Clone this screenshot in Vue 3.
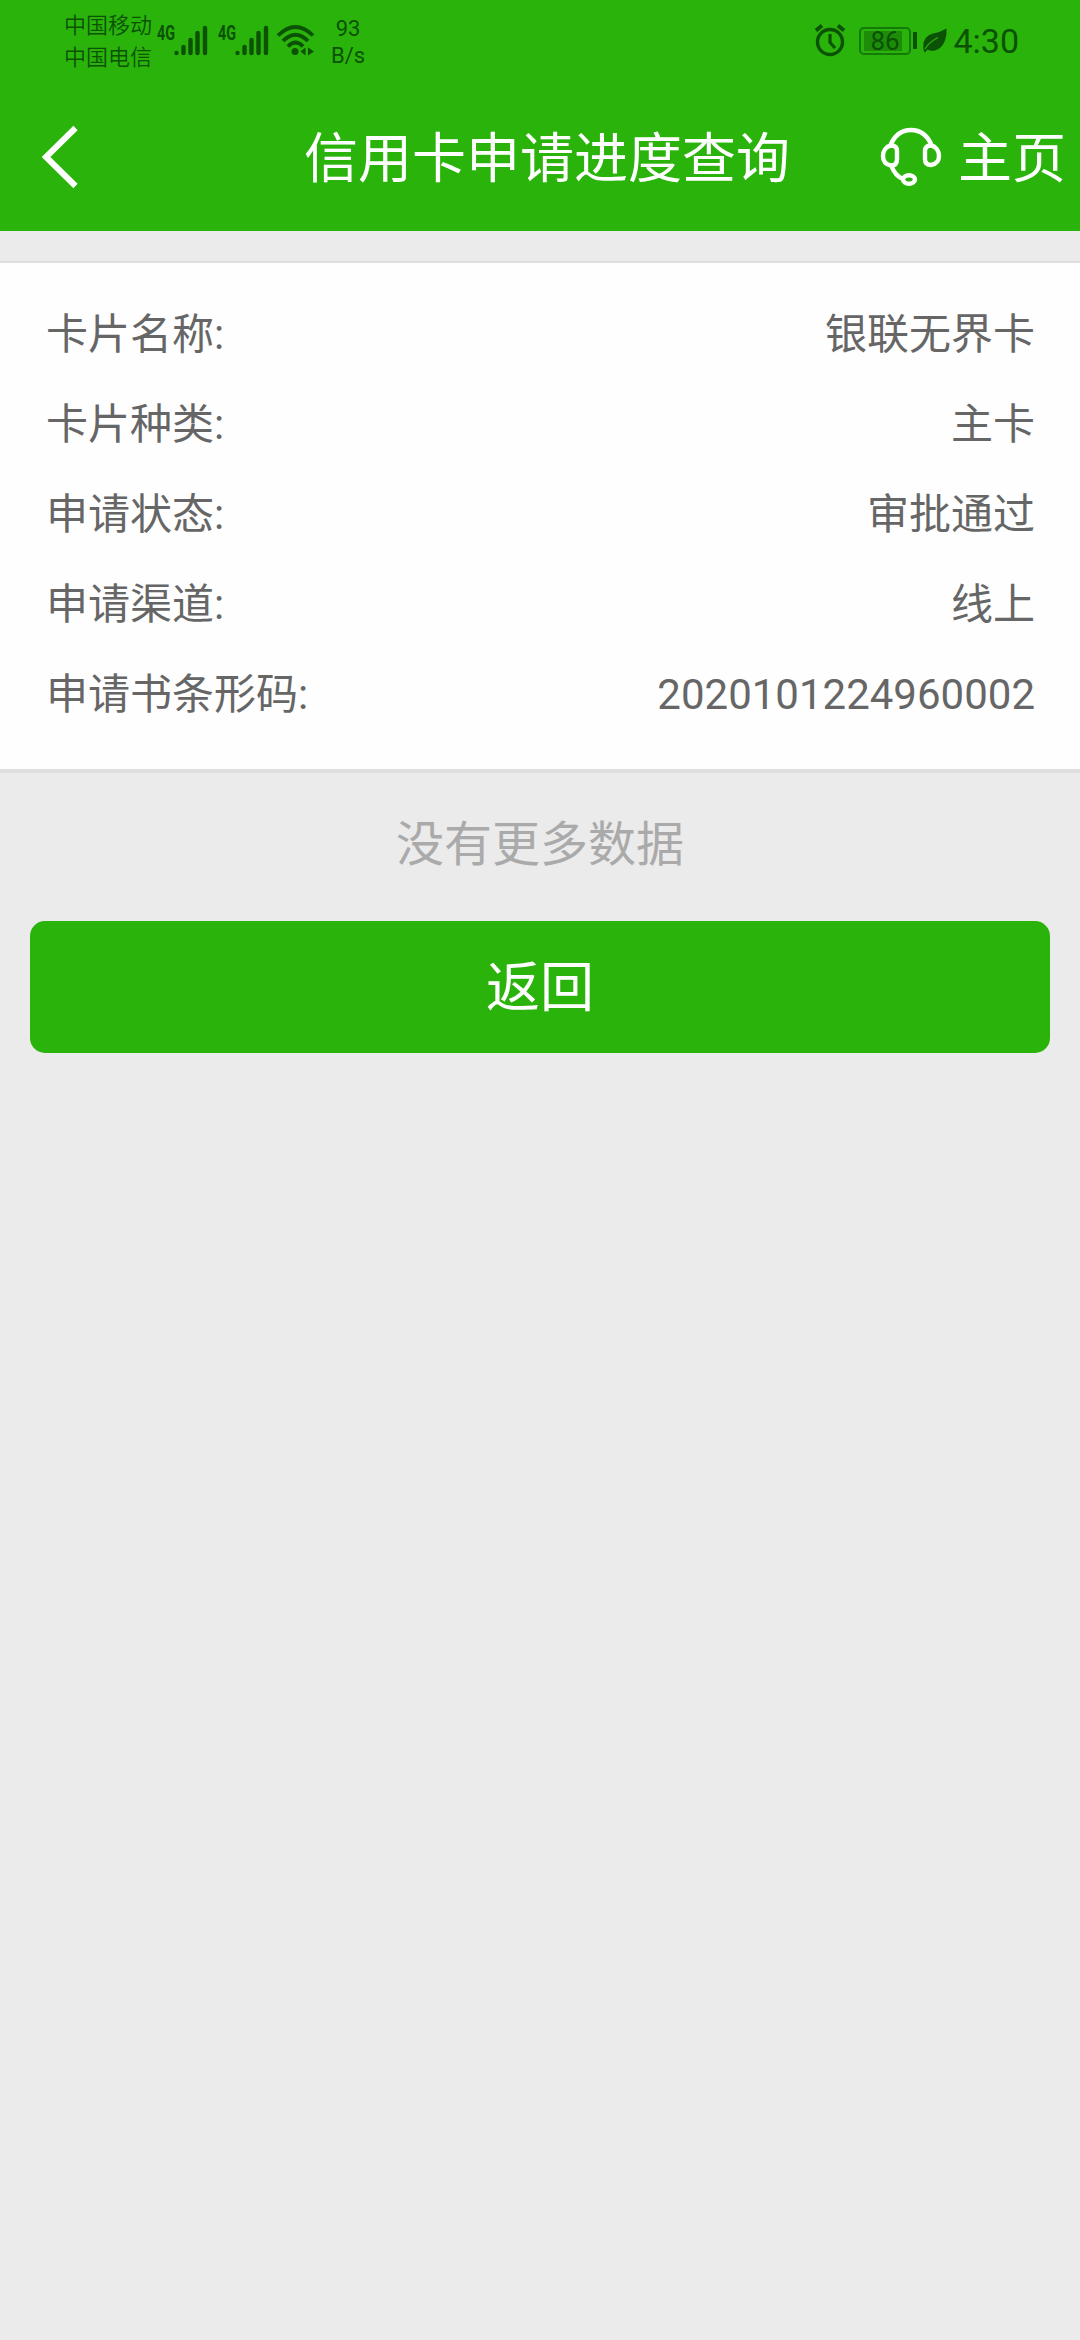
<script setup>
const rows = [
  { label: '卡片名称:', value: '银联无界卡' },
  { label: '卡片种类:', value: '主卡' },
  { label: '申请状态:', value: '审批通过' },
  { label: '申请渠道:', value: '线上' },
  { label: '申请书条形码:', value: '2020101224960002' }
]
const signals = [1, 2]
</script>

<template>
  <div class="page">
    <header class="header">
      <div class="status">
        <div class="carriers">
          <span>中国移动</span>
          <span>中国电信</span>
        </div>
        <svg v-for="s in signals" :key="s" class="signal" width="56" height="50" viewBox="-2 -8 56 50">
          <text x="0" y="17" textLength="18" lengthAdjust="spacingAndGlyphs" class="net">4G</text>
          <g stroke="currentColor" stroke-width="4.400" stroke-linecap="round">
            <path d="M19.500 30v.1M26.500 30v-6M33.500 30V17M40.500 30V10M48 30V5" />
          </g>
        </svg>
        <svg class="wifi" width="40" height="34" viewBox="0 0 40 34">
          <g fill="none" stroke="currentColor" stroke-width="3.800">
            <path d="M2 12.500Q19.500 -4.500 37 12.500" />
            <path d="M7 18Q19.500 5.500 32 18" />
            <path d="M12 23.500Q19.500 15.500 27 23.500" />
          </g>
          <circle cx="19" cy="28.500" r="3.500" fill="currentColor" />
          <path d="M29.500 24.500v8l-5-4zM32 24.500v8l6-4z" fill="currentColor" />
        </svg>
        <div class="speed">
          <span>93</span>
          <span>B/s</span>
        </div>
        <div class="status-right">
          <svg width="32" height="34" viewBox="0 0 32 34">
            <g fill="none" stroke="currentColor">
              <circle cx="16" cy="19" r="12.500" stroke-width="3.400" />
              <path d="M16 11v8.500l5 5.500" stroke-width="3.200" />
              <path d="M2 7.500l6-5M30 7.500l-6-5" stroke-width="3.800" />
            </g>
          </svg>
          <div class="battery"><span class="charge">86</span></div>
          <i class="nub"></i>
          <svg class="leaf" width="24" height="25" viewBox="0 0 24 25">
            <path d="M23.500 .5C24 10 21 20 12 22.500Q8 23.500 4.500 21.500L2 24.500 .8 23Q-2 9 10 5.500 18 4 23.500 .5z" fill="currentColor" />
            <path d="M2 21Q6 14 15 9.500" fill="none" stroke="#2ab30a" stroke-width="1.200" />
          </svg>
          <span class="clock">4:30</span>
        </div>
      </div>
      <nav class="nav">
        <svg class="back" width="40" height="66" viewBox="0 0 40 66">
          <path d="M35.500 4L6 33l29.500 29" fill="none" stroke="#fff" stroke-width="6" />
        </svg>
        <h1>信用卡申请进度查询</h1>
        <svg class="headset" width="62" height="60" viewBox="0 0 62 60">
          <g fill="none" stroke="#fff" stroke-width="4.400">
            <path d="M10 19C15 7 22 3 31 3S47 7 52 19" />
            <path d="M11 18.500C15.500 18.500 17 20.500 17 24v8c0 4-2 6.500-6 6.500C5.500 37.500 3 34 3 29s3-9.500 8-10.500z" />
            <path d="M51 18.500C46.500 18.500 45 20.500 45 24v8c0 4 2 6 6 6 5.500-1 8-4 8-9s-3-9.500-8-10.500z" />
            <path d="M11 38Q15 49 23 52" />
            <ellipse cx="29" cy="52.500" rx="6" ry="4.200" />
          </g>
        </svg>
        <span class="home">主页</span>
      </nav>
    </header>
    <main>
      <section class="card">
        <div v-for="row in rows" :key="row.label" class="row">
          <span>{{ row.label }}</span>
          <span>{{ row.value }}</span>
        </div>
      </section>
      <p class="empty">没有更多数据</p>
      <button class="return" type="button">返回</button>
    </main>
  </div>
</template>

<style>
body { background: #ebebeb; }
</style>

<style scoped>
.page {
  width: 1080px;
  height: 2340px;
  overflow: hidden;
  background: #ebebeb;
  font-family: Roboto, "Noto Sans CJK SC", sans-serif;
}
.header { height: 231px; background: #2ab30a; }
.status {
  display: flex;
  align-items: center;
  box-sizing: border-box;
  height: 80px;
  padding: 0 61px 0 64px;
  color: #0b5205;
}
.status svg { display: block; flex: none; }
.carriers, .speed { display: flex; flex-direction: column; font-size: 22px; }
.carriers { width: 91px; line-height: 32px; font-weight: 350; margin-top: 4px; }
.carriers span { white-space: nowrap; }
.signal { margin-right: 5px; }
.net { font: bold 20px Roboto, sans-serif; fill: currentColor; }
.wifi { margin-left: -1px; }
.speed { width: 50px; margin: 3px 0 0 7px; align-items: center; line-height: 27px; }
.status-right { display: flex; align-items: center; margin-left: auto; }
.battery {
  box-sizing: border-box;
  width: 52px;
  height: 28px;
  margin: 1px 0 0 13px;
  padding: 2px 3px;
  border: 2px solid #147a08;
  border-radius: 5px;
}
.charge {
  display: block;
  width: 38px;
  height: 20px;
  padding-left: 6px;
  box-sizing: border-box;
  background: #1c8c09;
  font-size: 26px;
  line-height: 20px;
}
.nub { width: 4px; height: 17px; margin-left: 2px; background: #0b5205; }
.leaf { margin-left: 6px; }
.clock { margin: 2px 0 0 6px; font-size: 34px; line-height: 40px; }
.nav {
  display: flex;
  align-items: center;
  height: 154px;
  color: #fff;
  font-size: 54px;
  line-height: 80px;
}
.nav svg { display: block; flex: none; }
.back { margin-left: 40px; }
.nav h1 { width: 486px; margin: 6px 0 0 224px; font-size: 54px; font-weight: 400; white-space: nowrap; }
.headset { margin-left: 90px; }
.home { margin: 6px 0 0 16px; white-space: nowrap; }
.card {
  margin-top: 30px;
  padding: 27px 45px 29px 46px;
  border-top: 2px solid #dedede;
  border-bottom: 4px solid #dedede;
  background: #fefefe;
  color: #666;
}
.row {
  display: flex;
  justify-content: space-between;
  height: 90px;
  font-size: 42px;
  line-height: 90px;
}
.empty {
  margin: 0;
  height: 148px;
  color: #aaa;
  font-size: 48px;
  line-height: 144px;
  text-align: center;
}
.return {
  display: block;
  box-sizing: border-box;
  width: 1020px;
  height: 132px;
  margin: 0 auto;
  padding: 4px 0 0;
  border: 0;
  border-radius: 15px;
  background: #2ab30a;
  color: #fff;
  font: 54px/128px Roboto, "Noto Sans CJK SC", sans-serif;
}
</style>
